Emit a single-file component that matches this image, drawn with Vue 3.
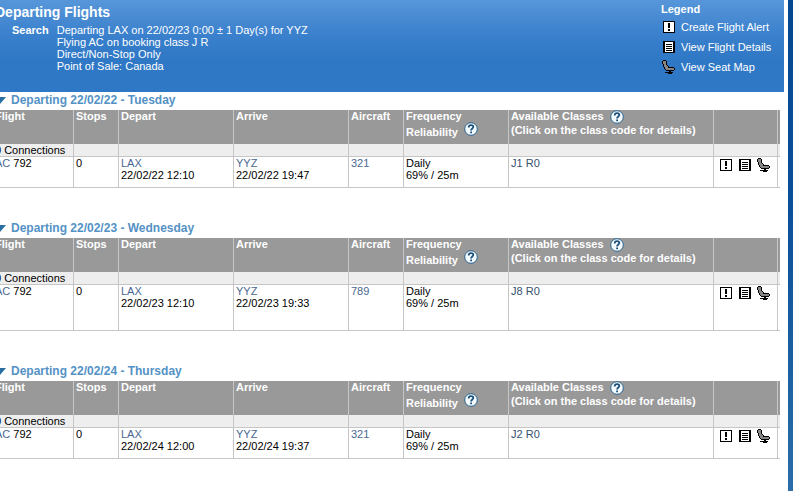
<script setup>
import { ref } from 'vue'

const legend = [
  { icon: 'alert', label: 'Create Flight Alert' },
  { icon: 'details', label: 'View Flight Details' },
  { icon: 'seat', label: 'View Seat Map' }
]

const days = ref([
  {
    date: '22/02/22', weekday: 'Tuesday', open: true,
    flights: [
      { airline: 'AC', number: '792', stops: 0, departAt: '22/02/22 12:10', arriveAt: '22/02/22 19:47', aircraft: '321', classes: ['J1', 'R0'] }
    ]
  },
  {
    date: '22/02/23', weekday: 'Wednesday', open: true, tall: true,
    flights: [
      { airline: 'AC', number: '792', stops: 0, departAt: '22/02/23 12:10', arriveAt: '22/02/23 19:33', aircraft: '789', classes: ['J8', 'R0'] }
    ]
  },
  {
    date: '22/02/24', weekday: 'Thursday', open: true,
    flights: [
      { airline: 'AC', number: '792', stops: 0, departAt: '22/02/24 12:00', arriveAt: '22/02/24 19:37', aircraft: '321', classes: ['J2', 'R0'] }
    ]
  }
])
</script>

<template>
  <div class="page">
    <!-- shared symbols -->
    <svg class="sprite" width="0" height="0" aria-hidden="true">
      <symbol id="alert" viewBox="0 0 14 14">
        <path d="M1 1h12v12H1z" fill="#000" />
        <path d="M2 2h10v10H2z" fill="#fff" />
        <path d="M6 3h2v5H6zM6 9h2v2H6z" fill="#000" />
      </symbol>
      <symbol id="details" viewBox="0 0 14 14">
        <path d="M1 1h12v12H1z" fill="#000" />
        <path d="M3 2h8v10H3z" fill="#fff" />
        <path d="M4 4h6v1H4zM4 6h6v1H4zM4 8h6v1H4zM4 10h6v1H4z" fill="#000" />
      </symbol>
      <symbol id="seat" viewBox="0 0 14 14">
        <path d="M1 0h3v1h1v4h1v1h1v1h5v1h1v2h-1v1H4v-1H3V9H2V7H1V4H0V1h1z" fill="#000" />
        <path d="M1 1h3v4h1v1h1v2h6v2H4V9H3V7H2V4H1z" fill="#858585" />
        <path d="M7 11h2v1H7zM3 12h8v1H3zM6 13h4v1H6z" fill="#000" />
      </symbol>
      <symbol id="help" viewBox="0 0 14 14">
        <circle cx="7" cy="7" r="6.3" fill="#f4fbff" stroke="#28628c" stroke-width="1" />
        <path d="M4.700 5.400C4.700 3.900 5.700 3.200 7 3.200s2.300.7 2.300 1.900C9.300 6.600 7.100 6.500 7.100 8.500" fill="none" stroke="#1d5078" stroke-width="1.800" />
        <path d="M6.200 9.500h1.800v1.700H6.200z" fill="#1d5078" />
      </symbol>
    </svg>

    <main class="content">
      <header class="banner">
        <div class="summary">
          <h1>Departing Flights</h1>
          <dl class="search">
            <dt>Search</dt>
            <dd>
              Departing LAX on 22/02/23 0:00 ± 1 Day(s) for YYZ<br>
              Flying AC on booking class J R<br>
              Direct/Non-Stop Only<br>
              Point of Sale: Canada
            </dd>
          </dl>
        </div>
        <div class="legend">
          <h2>Legend</h2>
          <ul>
            <li v-for="item in legend" :key="item.icon">
              <svg class="icon"><use :href="'#' + item.icon" /></svg>
              {{ item.label }}
            </li>
          </ul>
        </div>
      </header>

      <section v-for="day in days" :key="day.date" class="day">
        <h2>
          <button class="toggle" :aria-expanded="day.open" @click="day.open = !day.open">
            <svg class="arrow" :class="{ closed: !day.open }" viewBox="0 0 12 7"><path d="M0 0h12L6 7z" /></svg>
            Departing {{ day.date }} - {{ day.weekday }}
          </button>
        </h2>
        <table v-if="day.open" :class="{ tall: day.tall }">
          <colgroup>
            <col class="col-flight">
            <col class="col-stops">
            <col class="col-city">
            <col class="col-city">
            <col class="col-aircraft">
            <col class="col-frequency">
            <col>
            <col class="col-actions">
            <col class="col-end">
          </colgroup>
          <thead>
            <tr>
              <th>Flight</th>
              <th>Stops</th>
              <th>Depart</th>
              <th>Arrive</th>
              <th>Aircraft</th>
              <th>
                Frequency
                <div class="with-help low">
                  <span>Reliability</span>
                  <button class="help" aria-label="Reliability help"><svg><use href="#help" /></svg></button>
                </div>
              </th>
              <th>
                <div class="with-help">
                  <span>Available Classes</span>
                  <button class="help" aria-label="Available classes help"><svg><use href="#help" /></svg></button>
                </div>
                (Click on the class code for details)
              </th>
              <th></th>
              <th></th>
            </tr>
          </thead>
          <tbody>
            <tr class="group">
              <td>0 Connections</td>
              <td v-for="n in 8" :key="n"></td>
            </tr>
            <tr v-for="flight in day.flights" :key="flight.number" class="flight">
              <td><a href="#">{{ flight.airline }}</a> {{ flight.number }}</td>
              <td>{{ flight.stops }}</td>
              <td><a href="#">LAX</a><br>{{ flight.departAt }}</td>
              <td><a href="#">YYZ</a><br>{{ flight.arriveAt }}</td>
              <td><a href="#">{{ flight.aircraft }}</a></td>
              <td>Daily<br>69% / 25m</td>
              <td class="classes">
                <template v-for="code in flight.classes" :key="code"><a href="#">{{ code }}</a>{{ ' ' }}</template>
              </td>
              <td>
                <div class="actions">
                  <a v-for="item in legend" :key="item.icon" href="#" :aria-label="item.label">
                    <svg class="icon"><use :href="'#' + item.icon" /></svg>
                  </a>
                </div>
              </td>
              <td></td>
            </tr>
          </tbody>
        </table>
      </section>
    </main>
  </div>
</template>

<style>
body {
  margin: 0;
}
</style>

<style scoped>
.page {
  min-height: 100vh;
  padding-right: 5px;
  box-sizing: border-box;
  display: flex;
  background: linear-gradient(#04488f, #094f98 40%, #2a6da8);
  font-family: "Liberation Sans", Arial, sans-serif;
  font-size: 11px;
  line-height: 12px;
  color: #000;
  overflow: hidden;
}

.sprite {
  position: absolute;
}

.content {
  flex: 1;
  min-width: 0;
  margin-left: -7px;
  background: #fff;
}

h1,
h2,
dl,
dd,
ul {
  margin: 0;
  padding: 0;
}

.banner {
  display: flex;
  justify-content: space-between;
  min-height: 92px;
  margin-right: 4px;
  box-sizing: border-box;
  padding-left: 2px;
  background: linear-gradient(#5796da, #3a80cc 35px, #2f78c5 60px);
  color: #fff;
}

h1 {
  padding-top: 4px;
  font-size: 14px;
  line-height: 16px;
}

.search {
  display: flex;
  gap: 8px;
  padding: 4px 0 0 17px;
}

.search dt {
  font-weight: bold;
}

.legend {
  width: 123px;
  padding-top: 3px;
}

.legend h2 {
  font-size: 11px;
  line-height: 12px;
}

.legend ul {
  list-style: none;
  padding-top: 2px;
}

.legend li {
  display: flex;
  align-items: center;
  gap: 5px;
  height: 20px;
  padding-left: 1px;
}

.icon {
  display: block;
  width: 14px;
  height: 14px;
  shape-rendering: crispEdges;
}

.day {
  margin: 0 8px 32px 0;
}

.day:last-child {
  margin-bottom: 0;
}

.day h2 {
  font-size: 12px;
  line-height: 16px;
  height: 18px;
}

.toggle {
  display: flex;
  align-items: center;
  gap: 5px;
  padding: 0 0 0 1px;
  border: 0;
  background: none;
  font: inherit;
  color: #5492c5;
  cursor: pointer;
}

.arrow {
  width: 12px;
  height: 7px;
  fill: #2a6fa3;
}

.arrow.closed {
  transform: rotate(-90deg);
}

table {
  width: 100%;
  table-layout: fixed;
  border-collapse: separate;
  border-spacing: 0;
}

.col-flight {
  width: 81px;
}

.col-stops {
  width: 45px;
}

.col-city {
  width: 115px;
}

.col-aircraft {
  width: 55px;
}

.col-frequency {
  width: 105px;
}

.col-actions {
  width: 64px;
}

.col-end {
  width: 2px;
}

th,
td {
  padding: 0 2px;
  border-right: 1px solid #c6c6c6;
  text-align: left;
  vertical-align: top;
}

th:last-child,
td:last-child {
  padding: 0;
  border-right: 0;
}

th {
  height: 34px;
  background: #999;
  color: #fff;
  white-space: nowrap;
}

.with-help {
  display: flex;
  gap: 6px;
  height: 14px;
}

.with-help.low {
  height: 16px;
}

.with-help.low span {
  align-self: flex-end;
}

.help {
  width: 14px;
  height: 14px;
  padding: 0;
  border: 0;
  background: none;
  cursor: pointer;
}

.help svg {
  display: block;
  width: 14px;
  height: 14px;
}

.group td {
  height: 12px;
  background: #eee;
  border-bottom: 1px solid #c6c6c6;
}

.flight td {
  height: 30px;
  border-bottom: 1px solid #c6c6c6;
}

.tall .flight td {
  height: 45px;
}

a {
  color: #4a6791;
  text-decoration: none;
}

.classes a {
  color: #34516f;
}

.actions {
  display: flex;
  gap: 5px;
  padding: 1px 0 0 3px;
}
</style>
